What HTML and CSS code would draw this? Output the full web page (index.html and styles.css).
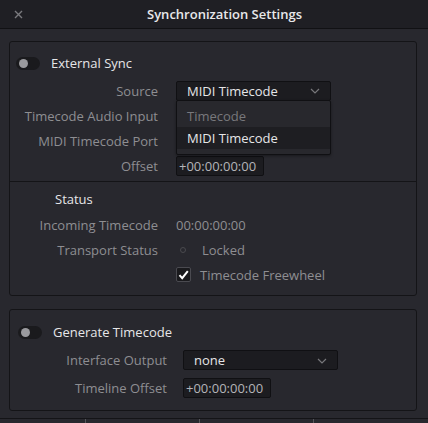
FILE: index.html
```html
<!DOCTYPE html>
<html>
<head>
<meta charset="utf-8">
<link rel="stylesheet" href="styles.css">
</head>
<body>
<div class="dialog">
  <div class="titlebar">
    <svg class="close" width="9" height="9" viewBox="0 0 9 9"><path d="M1 1L8 8M8 1L1 8" stroke="#7a7a7e" stroke-width="1.4"/></svg>
    <div class="title">Synchronization Settings</div>
  </div>
  <div class="content">
    <div class="panel p1">
      <div class="toggle-row">
        <span class="toggle"><span class="knob"></span></span>
        <span class="toggle-label">External Sync</span>
      </div>
      <div class="form f1">
        <div class="label">Source</div>
        <div class="ctl">
          <div class="select s1"><span>MIDI Timecode</span><svg class="chev" width="10" height="6" viewBox="0 0 10 6"><path d="M1 1L5 5L9 1" fill="none" stroke="#77777b" stroke-width="1.2"/></svg></div>
          <div class="menu">
            <div class="item dim">Timecode</div>
            <div class="item sel">MIDI Timecode</div>
          </div>
        </div>
        <div class="label">Timecode Audio Input</div>
        <div class="ctl"></div>
        <div class="label">MIDI Timecode Port</div>
        <div class="ctl"></div>
        <div class="label">Offset</div>
        <div class="ctl"><div class="field">+00:00:00:00</div></div>
      </div>
      <div class="sep"></div>
      <div class="status-head">Status</div>
      <div class="form f2">
        <div class="label">Incoming Timecode</div>
        <div class="ctl value">00:00:00:00</div>
        <div class="label">Transport Status</div>
        <div class="ctl value"><span class="dot"></span><span>Locked</span></div>
        <div class="label"></div>
        <div class="ctl value"><span class="check"><svg width="11" height="10" viewBox="0 0 11 10"><path d="M1.5 5.2L4.2 8.2L9.8 1.2" fill="none" stroke="#ffffff" stroke-width="2"/></svg></span><span>Timecode Freewheel</span></div>
      </div>
    </div>
    <div class="panel p2">
      <div class="toggle-row">
        <span class="toggle"><span class="knob"></span></span>
        <span class="toggle-label">Generate Timecode</span>
      </div>
      <div class="form f3">
        <div class="label">Interface Output</div>
        <div class="ctl"><div class="select s2"><span>none</span><svg class="chev" width="10" height="6" viewBox="0 0 10 6"><path d="M1 1L5 5L9 1" fill="none" stroke="#77777b" stroke-width="1.2"/></svg></div></div>
        <div class="label">Timeline Offset</div>
        <div class="ctl"><div class="field">+00:00:00:00</div></div>
      </div>
    </div>
  </div>
  <div class="footer">
    <div class="fcell c1"></div>
    <div class="fcell c2"></div>
    <div class="fcell c3"></div>
    <div class="fcell c4"></div>
  </div>
</div>
</body>
</html>
```
FILE: styles.css
```css
* { box-sizing: border-box; }
html, body { margin: 0; padding: 0; }
body {
  width: 428px;
  height: 423px;
  overflow: hidden;
  background: #28282e;
  font-family: "Open Sans", "Noto Sans", sans-serif;
  font-size: 13px;
  color: #8e8e92;
}
.dialog { width: 428px; height: 423px; display: flex; flex-direction: column; }
.titlebar {
  height: 29px;
  background: #1f1f24;
  border-bottom: 1px solid #111114;
  position: relative;
  display: flex;
  align-items: center;
  justify-content: center;
  flex-shrink: 0;
}
.close { position: absolute; left: 14px; top: 10px; }
.title {
  color: #e8e8ea;
  font-weight: 600;
  font-size: 13px;
  margin-left: 21px;
  margin-top: -1px;
}
.content {
  flex: 1;
  padding: 12px 0 0 9px;
  display: flex;
  flex-direction: column;
  gap: 13px;
}
.panel {
  width: 408px;
  border: 1px solid #141417;
  border-radius: 3px;
  background: #28282e;
}
.p1 { height: 255px; padding-top: 11px; }
.p2 { height: 102px; padding-top: 12px; }
.toggle-row { display: flex; align-items: center; height: 20px; }
.toggle {
  width: 24px; height: 13px;
  border-radius: 7px;
  background: #1a1a1d;
  margin-left: 6px;
  position: relative;
  display: inline-block;
}
.p2 .toggle { margin-left: 8px; }
.knob {
  position: absolute; left: 3px; top: 2px;
  width: 9px; height: 9px; border-radius: 50%;
  background: #9a9a9e;
}
.toggle-label { color: #e6e6e8; margin-left: 11px; }
.form { display: grid; align-items: center; }
.f1 { grid-template-columns: 148px 1fr; column-gap: 18px; grid-auto-rows: 25px; margin-top: 5px; }
.f2 { grid-template-columns: 148px 1fr; column-gap: 18px; grid-auto-rows: 25px; margin-top: 3px; }
.f3 { grid-template-columns: 157px 1fr; column-gap: 16px; grid-auto-rows: 28px; margin-top: 4px; }
.label { text-align: right; white-space: nowrap; }
.ctl { position: relative; display: flex; align-items: center; height: 100%; }
.select {
  height: 20px;
  background: #1c1c20;
  border: 1px solid #101013;
  border-radius: 2px;
  display: flex;
  align-items: center;
  justify-content: space-between;
  color: #e6e6e8;
}
.s1 { width: 155px; padding: 0 10px 0 10px; }
.s2 { width: 155px; padding: 0 10px 0 10px; }
.chev { margin-top: 1px; }
.menu {
  position: absolute;
  left: 0; top: 22px;
  width: 155px;
  height: 55px;
  background: #28282d;
  border: 1px solid #101013;
  border-radius: 2px;
  box-shadow: 0 1px 3px rgba(0,0,0,0.4);
  padding-top: 4px;
  z-index: 2;
}
.item { height: 22px; padding-left: 10px; display: flex; align-items: center; }
.item.dim { color: #78787c; }
.item.sel { background: #1e1e22; color: #e6e6e8; }
.field {
  height: 20px;
  width: 88px;
  background: #1c1c20;
  border: 1px solid #101013;
  border-radius: 2px;
  color: #b4b4b8;
  padding-left: 2px;
  display: flex;
  align-items: center;
}
.sep { height: 1px; background: #141417; margin: 3px 0 0 0; }
.status-head { color: #e6e6e8; height: 20px; line-height: 20px; margin: 7px 0 0 45px; }
.value { color: #8e8e92; }
.dot {
  width: 6px; height: 6px; border-radius: 50%;
  border: 1px solid #4a4a4e;
  margin: 0 16px 0 4px;
}
.check {
  width: 15px; height: 15px;
  background: #1a1a1d;
  border: 1px solid #4a4a50;
  border-radius: 2px;
  display: flex; align-items: center; justify-content: center;
  margin-right: 9px;
}
.footer {
  height: 5px;
  border-top: 1px solid #141417;
  display: flex;
  margin-bottom: 0;
  flex-shrink: 0;
}
.fcell { height: 100%; }
.c1 { width: 86px; border-right: 1px solid #55555a; }
.c2 { width: 114px; border-right: 1px solid #55555a; }
.c3 { width: 114px; border-right: 1px solid #55555a; }
.c4 { flex: 1; }
```
